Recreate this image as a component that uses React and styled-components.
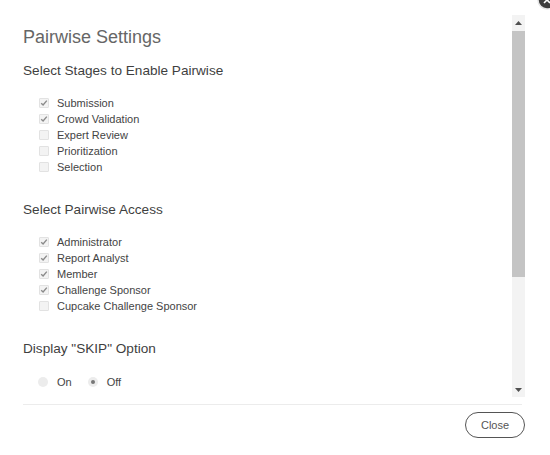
import styled, { createGlobalStyle } from "styled-components";

const GlobalStyle = createGlobalStyle`
  html, body {
    margin: 0;
    padding: 0;
    background: #fff;
    font-family: "Liberation Sans", Arial, sans-serif;
  }
`;

const stages = [
  { label: "Submission", checked: true },
  { label: "Crowd Validation", checked: true },
  { label: "Expert Review", checked: false },
  { label: "Prioritization", checked: false },
  { label: "Selection", checked: false },
];

const access = [
  { label: "Administrator", checked: true },
  { label: "Report Analyst", checked: true },
  { label: "Member", checked: true },
  { label: "Challenge Sponsor", checked: true },
  { label: "Cupcake Challenge Sponsor", checked: false },
];

const Check = ({ checked }) => (
  <Box>
    {checked && (
      <svg width="8" height="8" viewBox="0 0 8 8">
        <path
          d="M1.2 4.2 L3.1 6 L6.8 1.6"
          fill="none"
          stroke="#8a8a8a"
          strokeWidth="1.4"
        />
      </svg>
    )}
  </Box>
);

const App = () => (
  <>
    <GlobalStyle />
    <Modal>
      <CloseIcon>
        <svg width="20" height="20" viewBox="0 0 20 20">
          <circle cx="10" cy="10" r="9" fill="#3d3d3d" stroke="#e6e6e6" strokeWidth="1.5" />
          <path d="M7 7 L13 13 M13 7 L7 13" stroke="#fff" strokeWidth="1.6" />
        </svg>
      </CloseIcon>
      <Body>
        <Content>
          <Title>Pairwise Settings</Title>

          <Section>
            <Heading>Select Stages to Enable Pairwise</Heading>
            <List>
              {stages.map((s) => (
                <Item key={s.label}>
                  <Check checked={s.checked} />
                  {s.label}
                </Item>
              ))}
            </List>
          </Section>

          <Section>
            <Heading>Select Pairwise Access</Heading>
            <List>
              {access.map((s) => (
                <Item key={s.label}>
                  <Check checked={s.checked} />
                  {s.label}
                </Item>
              ))}
            </List>
          </Section>

          <Section>
            <Heading>Display "SKIP" Option</Heading>
            <Radios>
              <RadioLabel>
                <Radio />
                On
              </RadioLabel>
              <RadioLabel>
                <Radio $on />
                Off
              </RadioLabel>
            </Radios>
          </Section>
        </Content>
        <ScrollTrack>
          <ScrollArrow>
            <svg width="7" height="4" viewBox="0 0 7 4">
              <path d="M0 4 L3.5 0 L7 4 Z" fill="#505050" />
            </svg>
          </ScrollArrow>
          <Thumb />
          <ScrollArrow>
            <svg width="7" height="4" viewBox="0 0 7 4">
              <path d="M0 0 L7 0 L3.5 4 Z" fill="#505050" />
            </svg>
          </ScrollArrow>
        </ScrollTrack>
      </Body>
      <Footer>
        <CloseButton>Close</CloseButton>
      </Footer>
    </Modal>
  </>
);

export default App;

const Modal = styled.div`
  position: relative;
  width: 550px;
  height: 455px;
  box-sizing: border-box;
  padding: 15px 25px 0 23px;
  background: #fff;
  display: flex;
  flex-direction: column;
`;

const CloseIcon = styled.div`
  position: absolute;
  top: -10px;
  right: -7px;
  width: 20px;
  height: 20px;
`;

const Body = styled.div`
  height: 382px;
  display: flex;
`;

const Content = styled.div`
  flex: 1;
  overflow: hidden;
  padding-top: 11px;
`;

const ScrollTrack = styled.div`
  width: 13px;
  background: #f3f3f3;
  display: flex;
  flex-direction: column;
`;

const ScrollArrow = styled.div`
  height: 15px;
  display: flex;
  align-items: center;
  justify-content: center;
`;

const Thumb = styled.div`
  height: 246px;
  margin: 1px 0 auto;
  background: #c4c4c4;
`;

const Title = styled.h1`
  margin: 0 0 1px;
  font-size: 18px;
  line-height: 22px;
  font-weight: 400;
  color: #666;
`;

const Section = styled.section`
  margin-top: 14px;
  & + & {
    margin-top: 26px;
  }
`;

const Heading = styled.h2`
  margin: 0 0 15px;
  font-size: 13.6px;
  line-height: 18px;
  font-weight: 400;
  color: #3f3f3f;
`;

const List = styled.div`
  display: flex;
  flex-direction: column;
  padding-left: 16px;
`;

const Item = styled.label`
  display: flex;
  align-items: center;
  gap: 8px;
  font-size: 11px;
  line-height: 16px;
  color: #444;
`;

const Box = styled.span`
  width: 10px;
  height: 10px;
  box-sizing: border-box;
  border: 1px solid #e2e2e2;
  background: #f3f3f3;
  border-radius: 1px;
  display: flex;
  align-items: center;
  justify-content: center;
`;

const Radios = styled.div`
  display: flex;
  gap: 16px;
  padding: 1px 0 0 15px;
`;

const RadioLabel = styled.label`
  display: flex;
  align-items: center;
  gap: 9px;
  font-size: 11px;
  line-height: 16px;
  color: #444;
`;

const Radio = styled.span`
  width: 10px;
  height: 10px;
  border-radius: 50%;
  background: #ececec;
  display: flex;
  align-items: center;
  justify-content: center;
  &::after {
    content: "";
    display: ${(p) => (p.$on ? "block" : "none")};
    width: 4px;
    height: 4px;
    border-radius: 50%;
    background: #777;
  }
`;

const Footer = styled.div`
  border-top: 1px solid #ececec;
  margin: 7px 3px 0 0;
  padding-top: 7px;
  display: flex;
  justify-content: flex-end;
`;

const CloseButton = styled.button`
  width: 60px;
  height: 26px;
  margin-right: -3px;
  border: 1px solid #555;
  border-radius: 13px;
  background: #fff;
  font-family: "Liberation Sans", Arial, sans-serif;
  font-size: 11px;
  color: #555;
  cursor: pointer;
`;
